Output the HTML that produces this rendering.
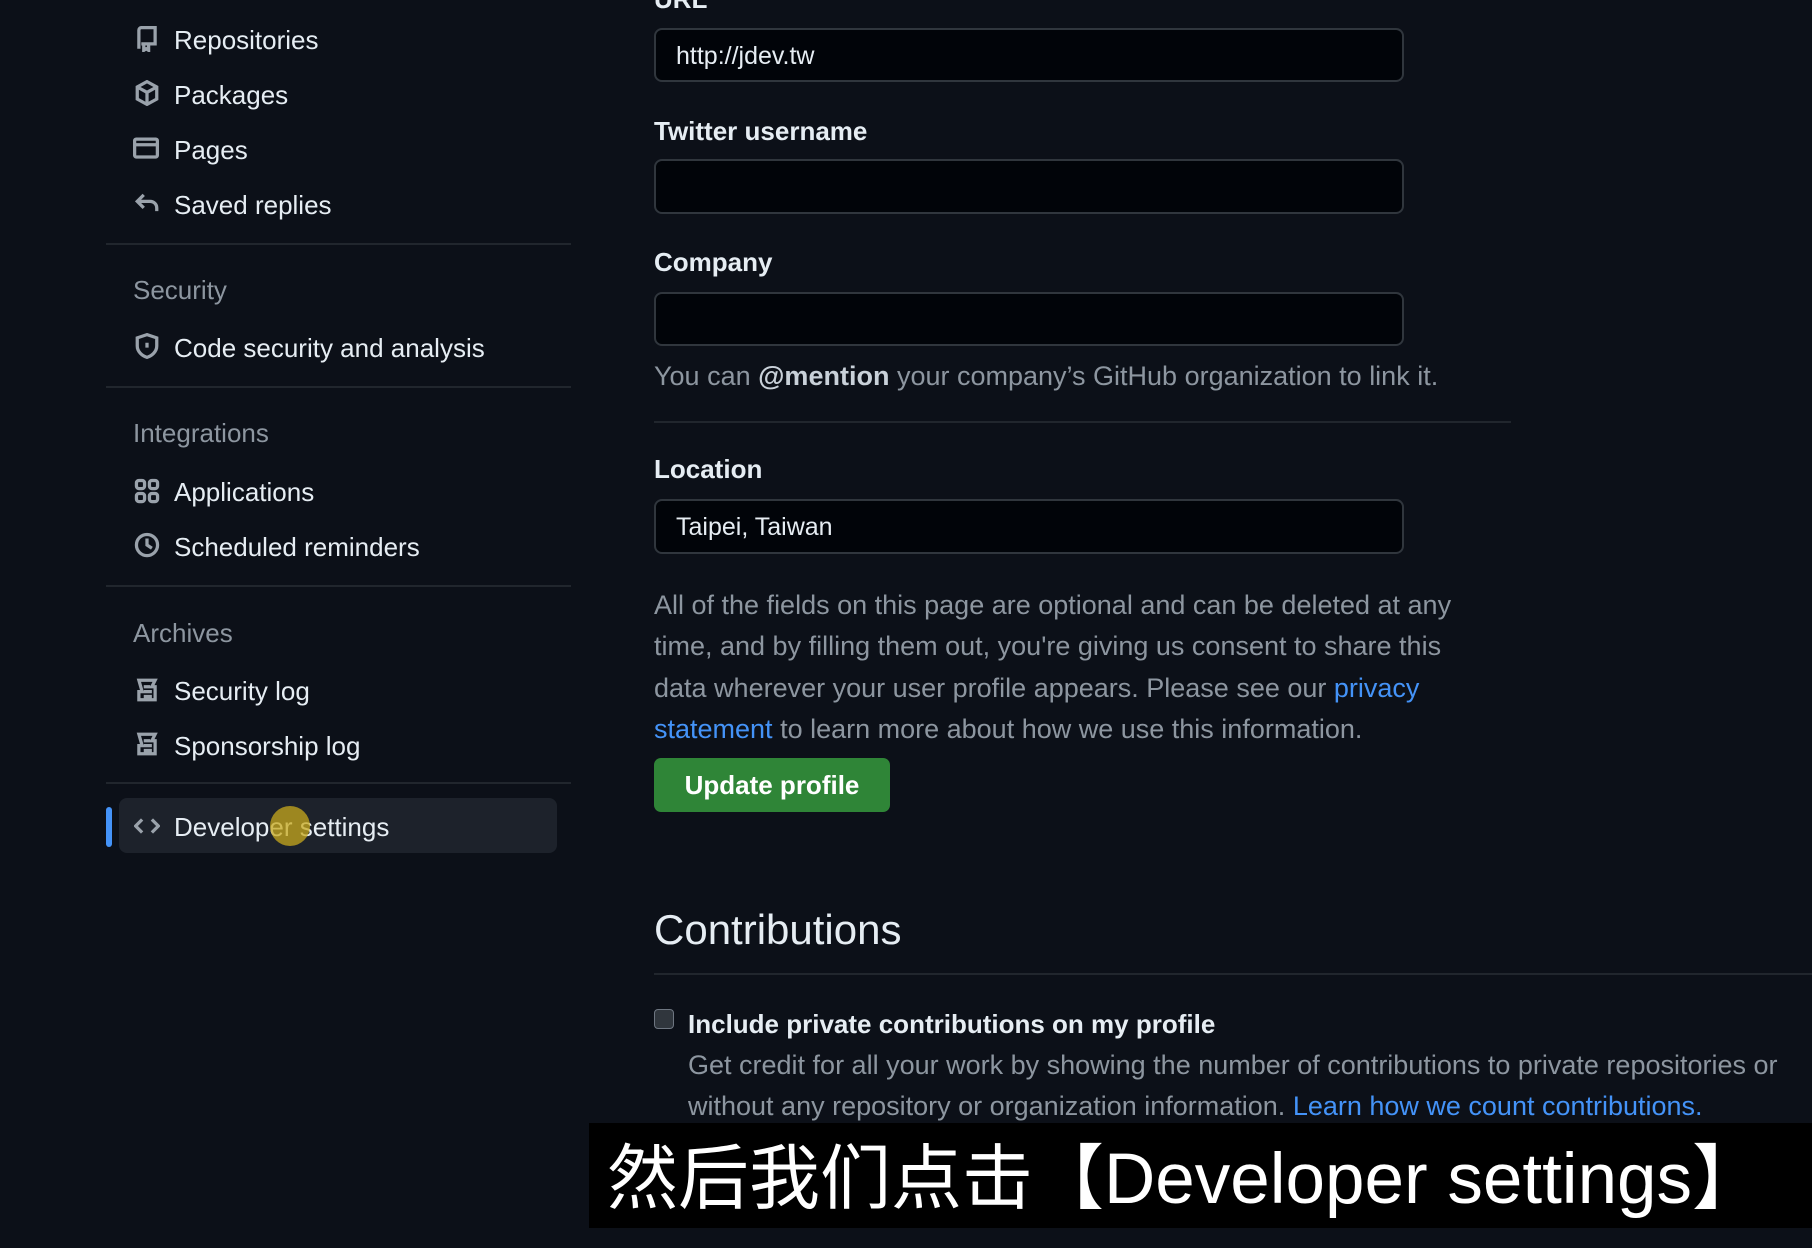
<!DOCTYPE html>
<html><head><meta charset="utf-8"><style>
body{margin:0;width:1812px;height:1248px;background:#0c1018;font-family:"Liberation Sans","Noto Sans CJK SC",sans-serif;color:#e6edf3;overflow:hidden;position:relative}
.a{position:absolute;white-space:nowrap}
.nav{font-size:26px;color:#e6edf3;line-height:30px}
.hd{font-size:26px;color:#8d96a0}
.ic{position:absolute;width:26px;height:26px;stroke:#9aa2ab;fill:none;stroke-width:2}
.hr{position:absolute;height:2px;background:#21262d}
.inp{position:absolute;left:654px;width:750px;background:#010409;border:2px solid #30363d;border-radius:8px;box-sizing:border-box}
.lbl{font-size:26px;font-weight:bold;color:#e6edf3}
.mut{color:#8d96a0;font-size:27px}
.lk{color:#4493f8}
</style></head><body>
<svg class="ic" style="left:134px;top:26px" viewBox="0 0 16 16"><path d="M3 14V2.5A1.5 1.5 0 0 1 4.5 1H13v10H4.5M6 11v4l1.5-1 1.5 1v-4"/></svg>
<div class="a nav" style="left:174px;top:25px">Repositories</div>
<svg class="ic" style="left:134px;top:80px" viewBox="0 0 16 16"><path d="M8 1l6 3.3v7.4L8 15l-6-3.3V4.3zM2 4.3 8 7.6l6-3.3M8 7.6V15"/></svg>
<div class="a nav" style="left:174px;top:80px">Packages</div>
<svg class="ic" style="left:133px;top:135px" viewBox="0 0 16 16"><rect x="1" y="2.5" width="14" height="11" rx="1"/><path d="M1 6h14"/></svg>
<div class="a nav" style="left:174px;top:135px">Pages</div>
<svg class="ic" style="left:134px;top:190px" viewBox="0 0 16 16"><path d="M6 3 2 7l4 4M2 7h8a4 4 0 0 1 4 4v2"/></svg>
<div class="a nav" style="left:174px;top:190px">Saved replies</div>
<div class="hr" style="left:106px;width:465px;top:243px"></div>
<div class="a hd" style="left:133px;top:275px">Security</div>
<svg class="ic" style="left:134px;top:333px" viewBox="0 0 16 16"><path d="M8 1 2 3v5c0 3.5 3 6 6 7 3-1 6-3.5 6-7V3zM8 6v3"/></svg>
<div class="a nav" style="left:174px;top:333px">Code security and analysis</div>
<div class="hr" style="left:106px;width:465px;top:386px"></div>
<div class="a hd" style="left:133px;top:418px">Integrations</div>
<svg class="ic" style="left:134px;top:478px" viewBox="0 0 16 16"><rect x="1.5" y="1.5" width="5" height="5" rx="1.5"/><rect x="9.5" y="1.5" width="5" height="5" rx="1.5"/><rect x="1.5" y="9.5" width="5" height="5" rx="1.5"/><rect x="9.5" y="9.5" width="5" height="5" rx="1.5"/></svg>
<div class="a nav" style="left:174px;top:477px">Applications</div>
<svg class="ic" style="left:134px;top:532px" viewBox="0 0 16 16"><circle cx="8" cy="8" r="6.5"/><path d="M8 4v4l3 2"/></svg>
<div class="a nav" style="left:174px;top:532px">Scheduled reminders</div>
<div class="hr" style="left:106px;width:465px;top:585px"></div>
<div class="a hd" style="left:133px;top:618px">Archives</div>
<svg class="ic" style="left:134px;top:677px" viewBox="0 0 16 16"><path d="M3 2h10l-2 4h2v8H3V9h2L3 2zM6 6h4M6 9h5M6 12h5"/></svg>
<div class="a nav" style="left:174px;top:676px">Security log</div>
<svg class="ic" style="left:134px;top:731px" viewBox="0 0 16 16"><path d="M3 2h10l-2 4h2v8H3V9h2L3 2zM6 6h4M6 9h5M6 12h5"/></svg>
<div class="a nav" style="left:174px;top:731px">Sponsorship log</div>
<div class="hr" style="left:106px;width:465px;top:782px"></div>
<div class="a" style="left:106px;top:807px;width:6px;height:40px;background:#4493f8;border-radius:3px"></div>
<div class="a" style="left:119px;top:798px;width:438px;height:55px;background:#1d222b;border-radius:8px"></div>
<svg class="ic" style="left:134px;top:813px" viewBox="0 0 16 16"><path d="M5 4 1 8l4 4M11 4l4 4-4 4"/></svg>
<div class="a nav" style="left:174px;top:812px">Developer settings</div>
<div class="a" style="left:270px;top:806px;width:40px;height:40px;border-radius:50%;background:rgba(200,170,30,.75)"></div>

<div class="a lbl" style="left:654px;top:-16px">URL</div>
<div class="inp" style="top:28px;height:54px"></div>
<div class="a" style="left:676px;top:42px;font-size:25px">http://jdev.tw</div>
<div class="a lbl" style="left:654px;top:116px">Twitter username</div>
<div class="inp" style="top:159px;height:55px"></div>
<div class="a lbl" style="left:654px;top:247px">Company</div>
<div class="inp" style="top:292px;height:54px"></div>
<div class="a mut" style="left:654px;top:361px">You can <b style="color:#c9d1d9">@mention</b> your company’s GitHub organization to link it.</div>
<div class="hr" style="left:654px;width:857px;top:421px"></div>
<div class="a lbl" style="left:654px;top:454px">Location</div>
<div class="inp" style="top:499px;height:55px"></div>
<div class="a" style="left:676px;top:513px;font-size:25px">Taipei, Taiwan</div>
<div class="a mut" style="left:654px;top:585px;line-height:41.3px;white-space:normal;width:815px">All of the fields on this page are optional and can be deleted at any time, and by filling them out, you're giving us consent to share this data wherever your user profile appears. Please see our <span class="lk">privacy statement</span> to learn more about how we use this information.</div>
<div class="a" style="left:654px;top:758px;width:236px;height:54px;background:#2f8537;border-radius:7px;color:#fff;font-size:26px;font-weight:bold;text-align:center;line-height:54px">Update profile</div>
<div class="a" style="left:654px;top:906px;font-size:42px;color:#e6edf3">Contributions</div>
<div class="hr" style="left:654px;width:1158px;top:973px"></div>
<div class="a" style="left:654px;top:1009px;width:20px;height:20px;border-radius:4px;background:#30363d;border:1px solid #6e7681;box-sizing:border-box"></div>
<div class="a lbl" style="left:688px;top:1009px">Include private contributions on my profile</div>
<div class="a mut" style="left:688px;top:1050px">Get credit for all your work by showing the number of contributions to private repositories or</div>
<div class="a mut" style="left:688px;top:1091px">without any repository or organization information. <span class="lk">Learn how we count contributions.</span></div>
<div class="a" style="left:589px;top:1123px;width:1223px;height:105px;background:#000"></div>
<div class="a" style="left:607px;top:1140px;font-size:71px;color:#fff;font-family:'Liberation Sans','Noto Sans CJK SC',sans-serif;line-height:80px">然后我们点击【Developer settings】</div>
</body></html>
